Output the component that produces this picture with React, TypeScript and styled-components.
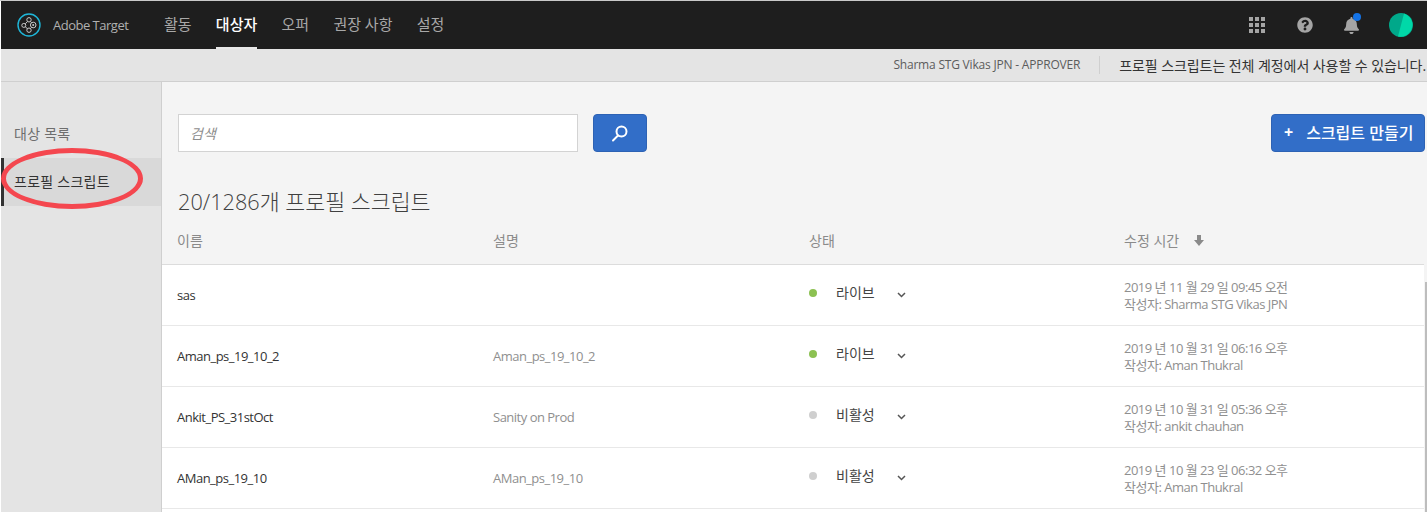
import styled, { createGlobalStyle } from "styled-components";
import { FaBell, FaQuestionCircle } from "react-icons/fa";

const GlobalStyle = createGlobalStyle`
  html, body {
    margin: 0;
    padding: 0;
    background: #fff;
  }
  body {
    font-family: "Open Sans", "Noto Sans CJK KR", sans-serif;
  }
`;

const Page = styled.div`
  position: relative;
  width: 1427px;
  height: 512px;
  overflow: hidden;
  border-top: 1px solid #c9c9c9;
  box-sizing: border-box;
  padding-left: 1px;
  display: flex;
  flex-direction: column;
`;

const TopBar = styled.header`
  height: 48px;
  flex: none;
  background: #1e1e1e;
  display: flex;
  align-items: center;
  padding-left: 16px;
  padding-right: 14px;
`;

const Brand = styled.div`
  display: flex;
  align-items: center;
  gap: 12px;
  width: 147px;
  color: #b0b0b0;
  font-size: 13px;
  font-weight: 500;
  letter-spacing: -0.5px;
`;

const Nav = styled.nav`
  display: flex;
  gap: 24.25px;
  height: 100%;
  flex: 1;
`;

const NavItem = styled.a<{ $active?: boolean }>`
  display: flex;
  align-items: center;
  height: 100%;
  box-sizing: border-box;
  padding-bottom: 2px;
  font-size: 15px;
  color: ${(p) => (p.$active ? "#fff" : "#a8a8a8")};
  font-weight: ${(p) => (p.$active ? 500 : 400)};
  border-bottom: 2px solid ${(p) => (p.$active ? "#e8e8e8" : "transparent")};
`;

const TopIcons = styled.div`
  display: flex;
  align-items: center;
`;

const GridIcon = styled.div`
  display: grid;
  grid-template-columns: repeat(3, 4px);
  grid-auto-rows: 4px;
  gap: 2px;
  margin-right: 32px;
`;

const GridDot = styled.span`
  background: #a5a5a5;
`;

const HelpIcon = styled(FaQuestionCircle)`
  width: 16px;
  height: 16px;
  color: #a5a5a5;
  margin-right: 31px;
`;

const BellWrap = styled.div`
  position: relative;
  display: flex;
  margin-right: 30px;
`;

const BellIcon = styled(FaBell)`
  width: 15px;
  height: 17px;
  color: #a5a5a5;
`;

const BellDot = styled.span`
  position: absolute;
  top: -4px;
  right: -2px;
  width: 8px;
  height: 8px;
  border-radius: 50%;
  background: #1473e6;
`;

const SubBar = styled.div`
  height: 33px;
  flex: none;
  box-sizing: border-box;
  background: #e4e4e4;
  border-bottom: 1px solid #cfcfcf;
  display: flex;
  align-items: center;
  justify-content: flex-end;
  padding-right: 1px;
  font-size: 12px;
`;

const UserName = styled.span`
  color: #5c5c5c;
  letter-spacing: -0.2px;
  padding-right: 19px;
  border-right: 1px solid #cfcfcf;
  margin-right: 19px;
  line-height: 18px;
`;

const Notice = styled.span`
  color: #333;
  font-size: 14px;
  letter-spacing: -0.07px;
`;

const Body = styled.div`
  flex: 1;
  display: flex;
  min-height: 0;
`;

const Sidebar = styled.aside`
  width: 161px;
  flex: none;
  box-sizing: border-box;
  background: #e4e4e4;
  border-right: 1px solid #cfcfcf;
  padding-top: 28px;
  display: flex;
  flex-direction: column;
`;

const SideItem = styled.div<{ $active?: boolean }>`
  height: 48px;
  box-sizing: border-box;
  display: flex;
  align-items: center;
  padding-left: ${(p) => (p.$active ? "10px" : "13px")};
  padding-bottom: 2px;
  font-size: 14px;
  letter-spacing: 0.25px;
  color: ${(p) => (p.$active ? "#333" : "#6e6e6e")};
  background: ${(p) => (p.$active ? "#d9d9d9" : "transparent")};
  border-left: ${(p) => (p.$active ? "3px solid #333" : "none")};
`;

const Main = styled.main`
  flex: 1;
  min-width: 0;
  background: #f4f4f4;
  display: flex;
  flex-direction: column;
`;

const Toolbar = styled.div`
  display: flex;
  align-items: center;
  padding: 32px 2px 0 16px;
`;

const SearchInput = styled.div`
  width: 400px;
  height: 38px;
  box-sizing: border-box;
  background: #fff;
  border: 1px solid #d3d3d3;
  display: flex;
  align-items: center;
  padding-left: 11px;
  font-size: 14px;
  font-style: italic;
  color: #8e8e8e;
`;

const SearchButton = styled.button`
  width: 54px;
  height: 38px;
  margin-left: 15px;
  background: #326ec8;
  border: 1px solid #2d62b4;
  border-radius: 4px;
  padding: 0;
  display: flex;
  align-items: center;
  justify-content: center;
`;

const CreateButton = styled.button`
  margin-left: auto;
  width: 154px;
  height: 38px;
  background: #326ec8;
  border: 1px solid #2d62b4;
  border-radius: 4px;
  color: #fff;
  font-family: inherit;
  font-size: 16px;
  font-weight: 500;
  display: flex;
  align-items: center;
  gap: 13px;
  padding: 0 0 2px 12px;
  white-space: nowrap;
`;

const Plus = styled.span`
  font-weight: 700;
`;

const Heading = styled.h2`
  margin: 35px 0 0 16px;
  font-size: 21.7px;
  line-height: 29px;
  font-weight: 300;
  color: #404040;
`;

const Row = styled.div`
  display: grid;
  grid-template-columns: 316px 316px 315px 1fr;
  padding-left: 15px;
  margin-right: 3px;
  align-items: center;
  flex: none;
`;

const HeadRow = styled(Row)`
  height: 49px;
  box-sizing: border-box;
  border-bottom: 1px solid #dcdcdc;
  font-size: 14px;
  color: #8a8a8a;
`;

const SortLabel = styled.span`
  display: flex;
  align-items: center;
  gap: 15px;
`;

const DataRow = styled(Row)`
  height: 61px;
  box-sizing: border-box;
  background: #fff;
  border-bottom: 1px solid #e8e8e8;
  font-size: 13px;
  letter-spacing: -0.5px;
`;

const Name = styled.div`
  color: #333;
`;

const Desc = styled.div`
  color: #8f8f8f;
`;

const Status = styled.div`
  display: flex;
  align-items: center;
  margin-top: -4px;
  color: #444;
  font-size: 14px;
  letter-spacing: 0;
`;

const Dot = styled.span<{ $live: boolean }>`
  width: 8px;
  height: 8px;
  border-radius: 50%;
  background: ${(p) => (p.$live ? "#8cc152" : "#cfcfcf")};
  margin-right: 19px;
`;

const StatusLabel = styled.span`
  width: 61px;
  margin-top: -2px;
`;

const Chevron = styled.svg`
  width: 9px;
  height: 6px;
  margin-top: 3px;
`;

const Modified = styled.div`
  color: #8f8f8f;
  line-height: 17px;
  margin-top: 2px;
`;

const ScrollThumb = styled.div`
  position: absolute;
  right: 0;
  top: 281px;
  bottom: 0;
  width: 2px;
  background: #bdbdbd;
`;

const Highlight = styled.div`
  position: absolute;
  left: 1px;
  top: 147px;
  width: 142px;
  height: 61px;
  box-sizing: border-box;
  border: 5px solid #f4474f;
  border-radius: 50%;
  pointer-events: none;
`;

const rows = [
  { name: "sas", desc: "", live: true, date: "2019 년 11 월 29 일 09:45 오전", by: "Sharma STG Vikas JPN" },
  { name: "Aman_ps_19_10_2", desc: "Aman_ps_19_10_2", live: true, date: "2019 년 10 월 31 일 06:16 오후", by: "Aman Thukral" },
  { name: "Ankit_PS_31stOct", desc: "Sanity on Prod", live: false, date: "2019 년 10 월 31 일 05:36 오후", by: "ankit chauhan" },
  { name: "AMan_ps_19_10", desc: "AMan_ps_19_10", live: false, date: "2019 년 10 월 23 일 06:32 오후", by: "Aman Thukral" },
];

const TargetLogo = () => (
  <svg width="24" height="24" viewBox="0 0 24 24" fill="none">
    <circle cx="12" cy="12" r="11" stroke="#1fb6d8" strokeWidth="1.4" />
    <g stroke="#c8c8c8" strokeWidth="1">
      <circle cx="12" cy="6.8" r="2.2" />
      <circle cx="12" cy="17.2" r="2.2" />
      <circle cx="6.8" cy="12.4" r="2" />
      <circle cx="16.2" cy="12" r="2.8" />
      <path d="M10.5 8.5 8.3 10.8M8.3 13.9l2.2 1.8M13.4 8.6l1.2 1.1M13.4 15.5l1.2-1.2" />
    </g>
    <circle cx="16.2" cy="12" r="1" fill="#c8c8c8" />
  </svg>
);

const App = () => (
  <Page>
    <GlobalStyle />
    <TopBar>
      <Brand>
        <TargetLogo />
        Adobe Target
      </Brand>
      <Nav>
        <NavItem>활동</NavItem>
        <NavItem $active>대상자</NavItem>
        <NavItem>오퍼</NavItem>
        <NavItem>권장 사항</NavItem>
        <NavItem>설정</NavItem>
      </Nav>
      <TopIcons>
        <GridIcon>
          {Array.from({ length: 9 }, (_, i) => (
            <GridDot key={i} />
          ))}
        </GridIcon>
        <HelpIcon />
        <BellWrap>
          <BellIcon />
          <BellDot />
        </BellWrap>
        <svg width="24" height="24" viewBox="0 0 24 24">
          <circle cx="12" cy="12" r="12" fill="#00a88a" />
          <path d="M15 .4A12 12 0 0 1 9 23.6Z" fill="#00d8a8" />
        </svg>
      </TopIcons>
    </TopBar>
    <SubBar>
      <UserName>Sharma STG Vikas JPN - APPROVER</UserName>
      <Notice>프로필 스크립트는 전체 계정에서 사용할 수 있습니다.</Notice>
    </SubBar>
    <Body>
      <Sidebar>
        <SideItem>대상 목록</SideItem>
        <SideItem $active>프로필 스크립트</SideItem>
      </Sidebar>
      <Main>
        <Toolbar>
          <SearchInput>검색</SearchInput>
          <SearchButton aria-label="검색">
            <svg width="18" height="18" viewBox="0 0 18 18" fill="none" stroke="#fff" strokeWidth="2">
              <circle cx="10.5" cy="7.5" r="5" />
              <path d="M7 11.5 2 16.5" strokeLinecap="round" />
            </svg>
          </SearchButton>
          <CreateButton>
            <Plus>+</Plus>
            스크립트 만들기
          </CreateButton>
        </Toolbar>
        <Heading>20/1286개 프로필 스크립트</Heading>
        <HeadRow>
          <span>이름</span>
          <span>설명</span>
          <span>상태</span>
          <SortLabel>
            수정 시간
            <svg width="10" height="11" viewBox="0 0 10 11" fill="#8a8a8a">
              <path d="M3 0h4v5h3l-5 6-5-6h3z" />
            </svg>
          </SortLabel>
        </HeadRow>
        {rows.map((r) => (
          <DataRow key={r.name}>
            <Name>{r.name}</Name>
            <Desc>{r.desc}</Desc>
            <Status>
              <Dot $live={r.live} />
              <StatusLabel>{r.live ? "라이브" : "비활성"}</StatusLabel>
              <Chevron viewBox="0 0 9 6" fill="none" stroke="#555" strokeWidth="1.5">
                <path d="M1 1l3.5 3.5L8 1" />
              </Chevron>
            </Status>
            <Modified>
              {r.date}
              <br />
              작성자: {r.by}
            </Modified>
          </DataRow>
        ))}
        <DataRow />
      </Main>
    </Body>
    <ScrollThumb />
    <Highlight />
  </Page>
);

export default App;
